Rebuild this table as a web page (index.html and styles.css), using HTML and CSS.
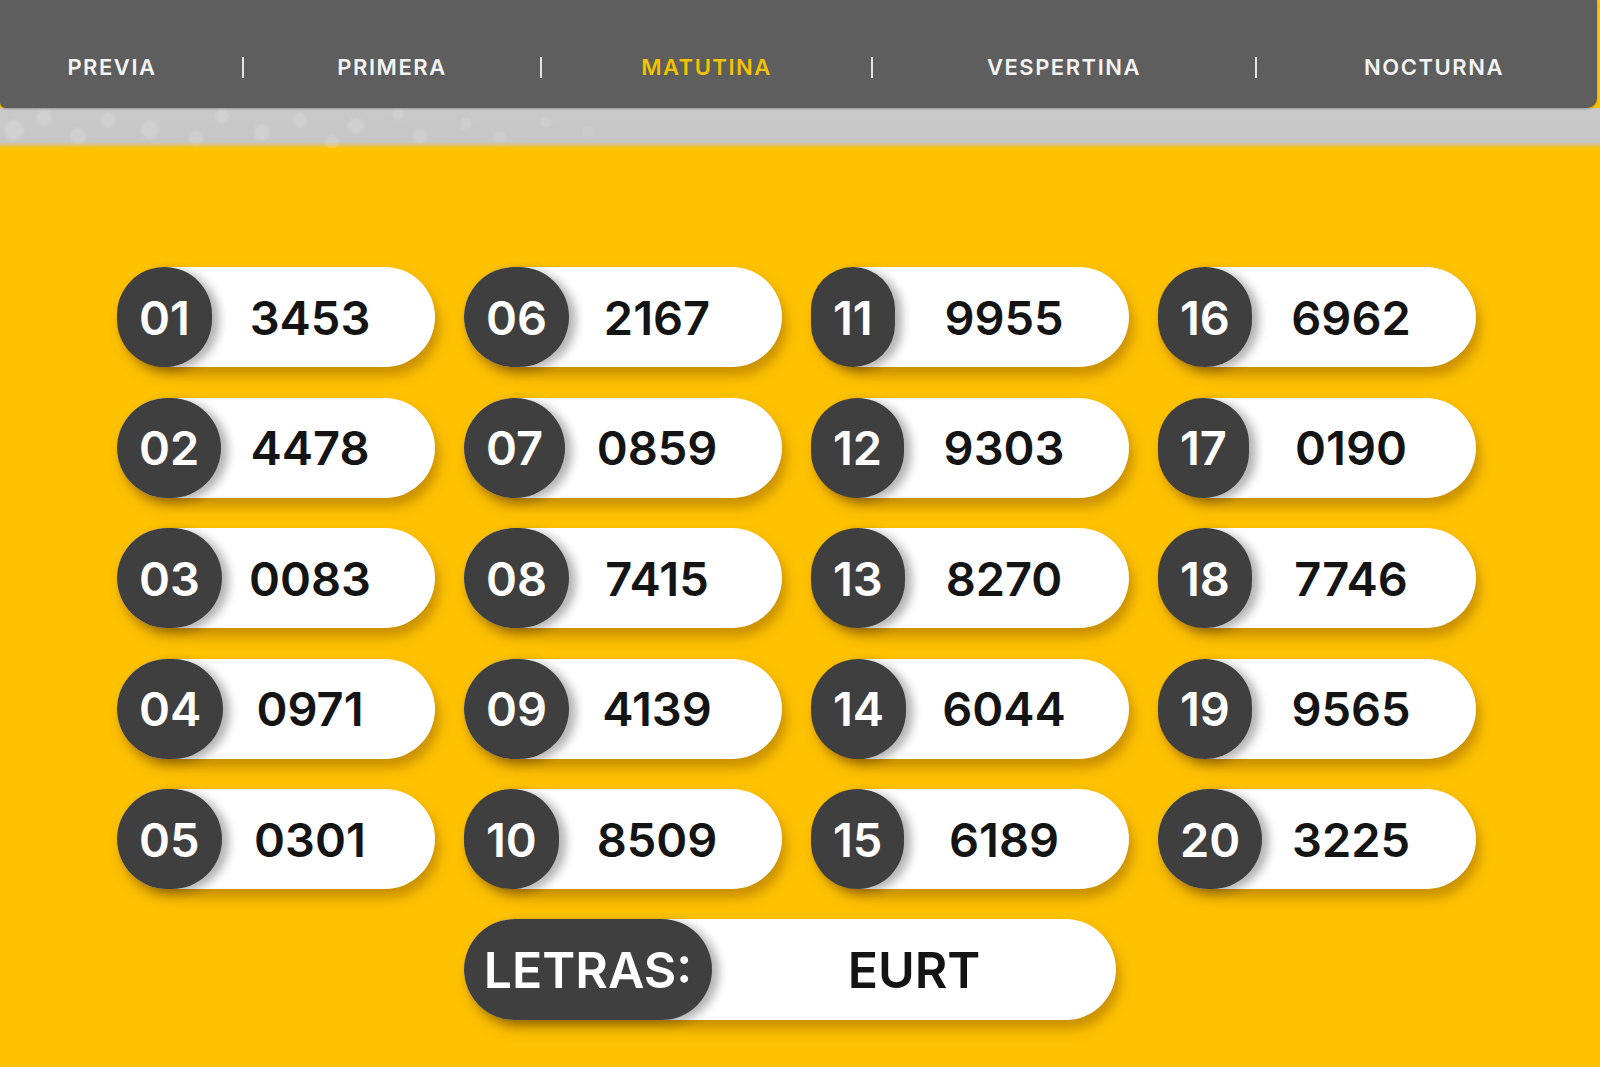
FILE: index.html
```html
<!DOCTYPE html>
<html lang="es">
<head>
<meta charset="utf-8">
<title>Quiniela - Matutina</title>
<link rel="stylesheet" href="styles.css">
</head>
<body>
<header class="topbar">
  <nav class="tabs">
    <a class="tab tab-first">PREVIA</a>
    <a class="tab tab-sep">PRIMERA</a>
    <a class="tab tab-sep tab-active">MATUTINA</a>
    <a class="tab tab-sep">VESPERTINA</a>
    <a class="tab tab-sep tab-last">NOCTURNA</a>
  </nav>
</header>
<div class="band"></div>
<main class="board">
  <div class="grid">
    <div class="pill"><span class="pos">01</span><span class="num">3453</span></div>
    <div class="pill"><span class="pos">02</span><span class="num">4478</span></div>
    <div class="pill"><span class="pos">03</span><span class="num">0083</span></div>
    <div class="pill"><span class="pos">04</span><span class="num">0971</span></div>
    <div class="pill"><span class="pos">05</span><span class="num">0301</span></div>
    <div class="pill"><span class="pos">06</span><span class="num">2167</span></div>
    <div class="pill"><span class="pos">07</span><span class="num">0859</span></div>
    <div class="pill"><span class="pos">08</span><span class="num">7415</span></div>
    <div class="pill"><span class="pos">09</span><span class="num">4139</span></div>
    <div class="pill"><span class="pos">10</span><span class="num">8509</span></div>
    <div class="pill"><span class="pos">11</span><span class="num">9955</span></div>
    <div class="pill"><span class="pos">12</span><span class="num">9303</span></div>
    <div class="pill"><span class="pos">13</span><span class="num">8270</span></div>
    <div class="pill"><span class="pos">14</span><span class="num">6044</span></div>
    <div class="pill"><span class="pos">15</span><span class="num">6189</span></div>
    <div class="pill"><span class="pos">16</span><span class="num">6962</span></div>
    <div class="pill"><span class="pos">17</span><span class="num">0190</span></div>
    <div class="pill"><span class="pos">18</span><span class="num">7746</span></div>
    <div class="pill"><span class="pos">19</span><span class="num">9565</span></div>
    <div class="pill"><span class="pos">20</span><span class="num">3225</span></div>
  </div>
  <div class="letras-row">
    <div class="letras"><span class="letras-label">LETRAS:</span><span class="letras-value">EURT</span></div>
  </div>
</main>
</body>
</html>
```
FILE: styles.css
```css
* { box-sizing: border-box; }

html, body {
  margin: 0;
  padding: 0;
}

body {
  width: 1600px;
  min-height: 1067px;
  background: #fec200;
  font-family: Inter, "Noto Sans", sans-serif;
  overflow: hidden;
}

.topbar {
  position: relative;
  z-index: 2;
  width: 1597px;
  height: 108px;
  background: #5e5e5e;
  border-radius: 0 0 10px 6px;
  box-shadow: 0 1px 2px rgba(0, 0, 0, 0.25);
  padding-top: 26px;
  display: flex;
  align-items: center;
}

.tabs {
  display: grid;
  grid-template-columns: 242px 298px 331px 384px 1fr;
  width: 100%;
  align-items: center;
}

.tab {
  display: flex;
  justify-content: center;
  align-items: center;
  height: 21px;
  font-size: 22px;
  line-height: 21px;
  font-weight: 600;
  letter-spacing: 0.07em;
  color: #f4f4f4;
  text-decoration: none;
}

.tab-sep {
  border-left: 2px solid #e4e4e4;
}

.tab-first {
  padding-right: 18px;
}

.tab-last {
  padding-left: 14px;
}

.tab-active {
  color: #f3c300;
}

.band {
  height: 40px;
  background:
    radial-gradient(circle at 14px 22px, rgba(255,255,255,0.18) 0 7px, transparent 12px),
    radial-gradient(circle at 44px 10px, rgba(255,255,255,0.16) 0 6px, transparent 10px),
    radial-gradient(circle at 78px 28px, rgba(255,255,255,0.16) 0 6px, transparent 10px),
    radial-gradient(circle at 108px 12px, rgba(255,255,255,0.15) 0 5px, transparent 9px),
    radial-gradient(circle at 150px 22px, rgba(255,255,255,0.17) 0 7px, transparent 11px),
    radial-gradient(circle at 196px 30px, rgba(255,255,255,0.15) 0 5px, transparent 9px),
    radial-gradient(circle at 222px 8px, rgba(255,255,255,0.15) 0 5px, transparent 9px),
    radial-gradient(circle at 262px 24px, rgba(255,255,255,0.16) 0 6px, transparent 10px),
    radial-gradient(circle at 300px 12px, rgba(255,255,255,0.14) 0 5px, transparent 9px),
    radial-gradient(circle at 332px 34px, rgba(255,255,255,0.14) 0 5px, transparent 9px),
    radial-gradient(circle at 356px 18px, rgba(255,255,255,0.15) 0 6px, transparent 10px),
    radial-gradient(circle at 398px 6px, rgba(255,255,255,0.13) 0 4px, transparent 8px),
    radial-gradient(circle at 420px 28px, rgba(255,255,255,0.14) 0 5px, transparent 9px),
    radial-gradient(circle at 466px 16px, rgba(255,255,255,0.12) 0 4px, transparent 8px),
    radial-gradient(circle at 500px 30px, rgba(255,255,255,0.12) 0 4px, transparent 8px),
    radial-gradient(circle at 546px 14px, rgba(255,255,255,0.1) 0 4px, transparent 7px),
    radial-gradient(circle at 588px 24px, rgba(255,255,255,0.08) 0 4px, transparent 7px),
    linear-gradient(to bottom, #c9c9c9 0, #c6c6c6 34px, #e2c257 38px, #fec200 40px);
}

.board {
  padding: 119px 0 0 117px;
  display: flex;
  flex-direction: column;
  gap: 30px;
}

.grid {
  display: grid;
  grid-template-columns: repeat(4, 318px);
  grid-template-rows: repeat(5, 100px);
  grid-auto-flow: column;
  column-gap: 29px;
  row-gap: 30.5px;
}

.pill {
  display: grid;
  height: 100px;
  background: #ffffff;
  border-radius: 50px;
  box-shadow: 4px 9px 12px rgba(150, 95, 0, 0.5);
}

.pill > span {
  grid-area: 1 / 1;
}

.num {
  align-self: center;
  text-align: center;
  padding-left: 68px;
  font-size: 47px;
  font-weight: 600;
  color: #141414;
  line-height: 1;
}

.pos {
  justify-self: start;
  display: flex;
  align-items: center;
  justify-content: center;
  height: 100px;
  padding: 0 22px;
  border-radius: 50px;
  background: #3f3f3f;
  color: #ffffff;
  font-size: 47px;
  font-weight: 600;
  line-height: 1;
  box-shadow: 7px 3px 10px rgba(0, 0, 0, 0.3);
}

.letras-row {
  padding-left: 347px;
}

.letras {
  display: flex;
  align-items: center;
  width: 652px;
  height: 101px;
  background: #ffffff;
  border-radius: 51px;
  box-shadow: 4px 9px 12px rgba(150, 95, 0, 0.5);
}

.letras-label {
  display: flex;
  align-items: center;
  justify-content: center;
  height: 101px;
  width: 248px;
  border-radius: 51px;
  background: #3f3f3f;
  color: #ffffff;
  font-size: 50px;
  font-weight: 600;
  line-height: 1;
  box-shadow: 7px 3px 10px rgba(0, 0, 0, 0.3);
}

.letras-value {
  flex: 1;
  text-align: center;
  font-size: 50px;
  font-weight: 600;
  color: #141414;
  line-height: 1;
}
```
